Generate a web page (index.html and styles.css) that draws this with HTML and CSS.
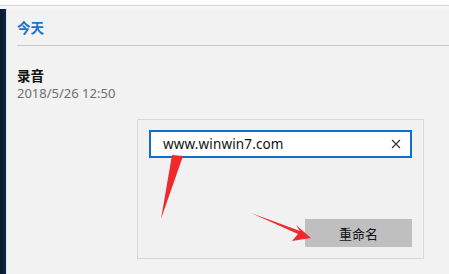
FILE: index.html
```html
<!DOCTYPE html>
<html lang="zh-CN">
<head>
<meta charset="utf-8">
<title>录音</title>
<link rel="stylesheet" href="styles.css">
</head>
<body>
<div class="topbar"></div>
<div class="layout">
  <div class="sidebar"></div>
  <div class="main">
    <div class="section-title">今天</div>
    <div class="item">
      <div class="item-name">录音</div>
      <div class="item-date">2018/5/26 12:50</div>
    </div>
    <div class="dialog">
      <div class="input">
        <span class="input-text">www.winwin7.com</span>
        <svg class="clear" width="10" height="10" viewBox="0 0 10 10"><path d="M1 1L9 9M9 1L1 9" stroke="#333" stroke-width="1.1" fill="none"/></svg>
      </div>
      <div class="actions">
        <div class="btn">重命名</div>
      </div>
    </div>
  </div>
</div>
<svg class="annot" width="449" height="274" viewBox="0 0 449 274">
  <polygon points="172,155 183,156 161,219" fill="#f02a2a"/>
  <polygon points="251,213 300,231 296,225 311,238 292,241 298,234" fill="#f02a2a"/>
</svg>
</body>
</html>
```
FILE: styles.css
```css
html, body {
  margin: 0;
  padding: 0;
}
body {
  width: 449px;
  height: 274px;
  overflow: hidden;
  background: #f2f2f2;
  font-family: "Noto Sans", "Noto Sans CJK SC", sans-serif;
  position: relative;
}
.topbar {
  height: 5px;
  background: #ffffff;
  border-bottom: 1px solid #d6d6d6;
}
.layout {
  display: flex;
  height: 268px;
  background: linear-gradient(#f6f6f6, #f2f2f2 6px);
}
.sidebar {
  width: 6px;
  margin-top: 3px;
  background: linear-gradient(90deg, #06182c, #0c2742);
  border-right: 1px solid #dbe6f2;
}
.main {
  flex: 1;
  padding-left: 10px;
}
.section-title {
  padding-top: 13px;
  padding-bottom: 9px;
  line-height: 17px;
  font-family: "Noto Sans CJK SC", sans-serif;
  font-size: 13.5px;
  font-weight: bold;
  color: #1c76c6;
  border-bottom: 1px solid #c8c8c8;
}
.item {
  padding-top: 20px;
}
.item-name {
  font-family: "Noto Sans CJK SC", sans-serif;
  font-size: 13.5px;
  font-weight: bold;
  line-height: 18px;
  color: #111;
}
.item-date {
  font-size: 13px;
  line-height: 19px;
  color: #6e6e6e;
}
.dialog {
  margin-top: 16px;
  margin-left: 120px;
  border: 1px solid #d8d8d8;
  background: #f1f1f1;
  padding: 10px 11px 11px;
  box-sizing: border-box;
  width: 287px;
  height: 140px;
  display: flex;
  flex-direction: column;
  justify-content: space-between;
}
.input {
  height: 28px;
  box-sizing: border-box;
  border: 2px solid #0f6fce;
  background: #ffffff;
  display: flex;
  align-items: center;
  padding: 0 9px 0 12px;
}
.input-text {
  flex: 1;
  font-size: 13.5px;
  color: #111;
  letter-spacing: 0.15px;
}
.clear {
  display: block;
}
.actions {
  display: flex;
  justify-content: flex-end;
}
.btn {
  width: 107px;
  height: 28px;
  background: #bfbfbf;
  display: flex;
  align-items: center;
  justify-content: center;
  font-family: "Noto Sans CJK SC", sans-serif;
  font-size: 13px;
  color: #111;
}
.annot {
  position: absolute;
  left: 0;
  top: 0;
  pointer-events: none;
}
```
